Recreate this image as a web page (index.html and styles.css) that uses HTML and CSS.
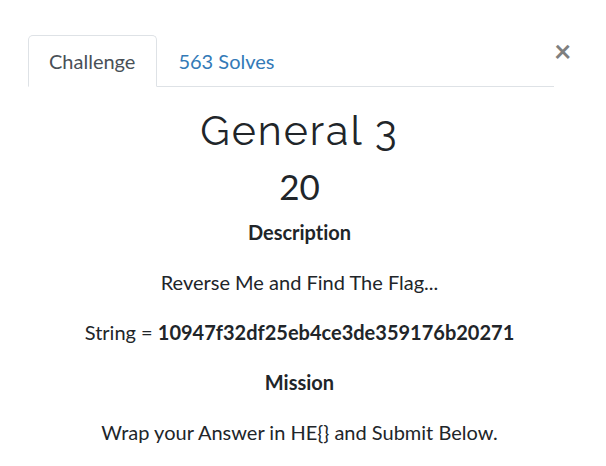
FILE: index.html
```
<!DOCTYPE html>
<html lang="en">
<head>
<meta charset="utf-8">
<title>General 3</title>
<link rel="stylesheet" href="styles.css">
</head>
<body>
<main class="modal">
  <header class="modal-top">
    <nav class="tabs">
      <a class="tab tab-active" href="#challenge">Challenge</a>
      <a class="tab" href="#solves">563 Solves</a>
    </nav>
    <button class="close" type="button" aria-label="Close">×</button>
  </header>
  <section class="challenge" id="challenge">
    <h1 class="name">General 3</h1>
    <h2 class="value">20</h2>
    <p><strong>Description</strong></p>
    <p>Reverse Me and Find The Flag...</p>
    <p>String = <strong>10947f32df25eb4ce3de359176b20271</strong></p>
    <p><strong>Mission</strong></p>
    <p>Wrap your Answer in HE{} and Submit Below.</p>
  </section>
</main>
</body>
</html>
```
FILE: styles.css
```
* {
  box-sizing: border-box;
}

body {
  margin: 0;
  background: #fff;
  color: #212529;
  font: 20px/30px Lato, "Liberation Sans", sans-serif;
  font-variant-ligatures: none;
}

.modal {
  padding: 35px 28px 16px;
}

.modal-top {
  display: flex;
  align-items: flex-start;
  padding-right: 8px;
}

.tabs {
  display: flex;
  flex: 1;
  border-bottom: 1px solid #dee2e6;
}

.tab {
  margin-bottom: -1px;
  padding: 10px 21px 10px 20px;
  border: 1px solid transparent;
  border-radius: 5px 5px 0 0;
  color: #337ab7;
  text-decoration: none;
}

.tab-active {
  border-color: #dee2e6 #dee2e6 #fff;
  background: #fff;
  color: #495057;
}

.close {
  width: 16px;
  padding: 0;
  border: 0;
  background: none;
  color: #7f7f7f;
  font: bold 30px/30px Lato, "Liberation Sans", sans-serif;
  cursor: pointer;
}

.challenge {
  padding: 20px 7px 0 0;
  text-align: center;
}

.name {
  margin: 0;
  font: 400 41px/48px Raleway, Lato, sans-serif;
  letter-spacing: 2px;
}

.value {
  margin: 8px 0;
  font-size: 35px;
  font-weight: 400;
  line-height: 46px;
}

p {
  margin: 0 0 20px;
}
```
